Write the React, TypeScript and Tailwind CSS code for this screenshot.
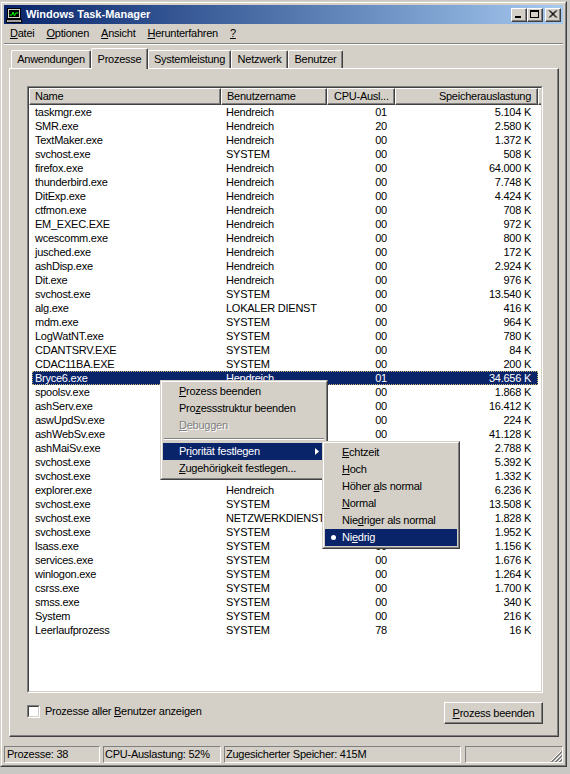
import React from "react";

type Proc = { name: string; user: string; cpu: string; mem: string };

// rows whose user / cpu cells sit under the open menus are left empty
const procs: Proc[] = [
  { name: "taskmgr.exe", user: "Hendreich", cpu: "01", mem: "5.104 K" },
  { name: "SMR.exe", user: "Hendreich", cpu: "20", mem: "2.580 K" },
  { name: "TextMaker.exe", user: "Hendreich", cpu: "00", mem: "1.372 K" },
  { name: "svchost.exe", user: "SYSTEM", cpu: "00", mem: "508 K" },
  { name: "firefox.exe", user: "Hendreich", cpu: "00", mem: "64.000 K" },
  { name: "thunderbird.exe", user: "Hendreich", cpu: "00", mem: "7.748 K" },
  { name: "DitExp.exe", user: "Hendreich", cpu: "00", mem: "4.424 K" },
  { name: "ctfmon.exe", user: "Hendreich", cpu: "00", mem: "708 K" },
  { name: "EM_EXEC.EXE", user: "Hendreich", cpu: "00", mem: "972 K" },
  { name: "wcescomm.exe", user: "Hendreich", cpu: "00", mem: "800 K" },
  { name: "jusched.exe", user: "Hendreich", cpu: "00", mem: "172 K" },
  { name: "ashDisp.exe", user: "Hendreich", cpu: "00", mem: "2.924 K" },
  { name: "Dit.exe", user: "Hendreich", cpu: "00", mem: "976 K" },
  { name: "svchost.exe", user: "SYSTEM", cpu: "00", mem: "13.540 K" },
  { name: "alg.exe", user: "LOKALER DIENST", cpu: "00", mem: "416 K" },
  { name: "mdm.exe", user: "SYSTEM", cpu: "00", mem: "964 K" },
  { name: "LogWatNT.exe", user: "SYSTEM", cpu: "00", mem: "780 K" },
  { name: "CDANTSRV.EXE", user: "SYSTEM", cpu: "00", mem: "84 K" },
  { name: "CDAC11BA.EXE", user: "SYSTEM", cpu: "00", mem: "200 K" },
  { name: "Bryce6.exe", user: "Hendreich", cpu: "01", mem: "34.656 K" },
  { name: "spoolsv.exe", user: "", cpu: "00", mem: "1.868 K" },
  { name: "ashServ.exe", user: "", cpu: "00", mem: "16.412 K" },
  { name: "aswUpdSv.exe", user: "", cpu: "00", mem: "224 K" },
  { name: "ashWebSv.exe", user: "", cpu: "00", mem: "41.128 K" },
  { name: "ashMaiSv.exe", user: "", cpu: "", mem: "2.788 K" },
  { name: "svchost.exe", user: "", cpu: "", mem: "5.392 K" },
  { name: "svchost.exe", user: "", cpu: "", mem: "1.332 K" },
  { name: "explorer.exe", user: "Hendreich", cpu: "", mem: "6.236 K" },
  { name: "svchost.exe", user: "SYSTEM", cpu: "", mem: "13.508 K" },
  { name: "svchost.exe", user: "NETZWERKDIENST", cpu: "", mem: "1.828 K" },
  { name: "svchost.exe", user: "SYSTEM", cpu: "", mem: "1.952 K" },
  { name: "lsass.exe", user: "SYSTEM", cpu: "00", mem: "1.156 K" },
  { name: "services.exe", user: "SYSTEM", cpu: "00", mem: "1.676 K" },
  { name: "winlogon.exe", user: "SYSTEM", cpu: "00", mem: "1.264 K" },
  { name: "csrss.exe", user: "SYSTEM", cpu: "00", mem: "1.700 K" },
  { name: "smss.exe", user: "SYSTEM", cpu: "00", mem: "340 K" },
  { name: "System", user: "SYSTEM", cpu: "00", mem: "216 K" },
  { name: "Leerlaufprozess", user: "SYSTEM", cpu: "78", mem: "16 K" },
];

const SELECTED = 19;

// classic 3d edges
const raised =
  "border border-t-white border-l-white border-r-[#404040] border-b-[#404040] shadow-[inset_-1px_-1px_0_#808080]";
const menuBox =
  "border border-t-[#d4d0c8] border-l-[#d4d0c8] border-r-[#404040] border-b-[#404040] bg-[#d4d0c8]";
const menuBoxInner =
  "border border-t-white border-l-white border-r-[#808080] border-b-[#808080] p-px";

const TitleIcon = () => (
  <svg width="16" height="16" viewBox="0 0 16 16">
    <rect x="1.5" y="1.5" width="13" height="10" fill="#d4d0c8" stroke="#000" />
    <rect x="3" y="3" width="10" height="7" fill="#000" />
    <polyline points="3.5,8 6,8 7,5 8.5,9 9.5,6 12.5,6" fill="none" stroke="#00ff00" strokeWidth="1" />
    <rect x="0.5" y="12.5" width="15" height="3" fill="#c0c0c0" stroke="#000" />
    <line x1="2" y1="14" x2="14" y2="14" stroke="#808080" />
  </svg>
);

const CaptionButton = ({ kind }: { kind: "min" | "max" | "close" }) => (
  <div className={`w-[16px] h-[14px] bg-[#d4d0c8] flex items-center justify-center ${raised}`}>
    <svg width="10" height="9" viewBox="0 0 10 9">
      {kind === "min" && <rect x="1" y="6" width="6" height="2" fill="#000" />}
      {kind === "max" && (
        <>
          <rect x="0.5" y="0.5" width="8" height="7" fill="none" stroke="#000" />
          <rect x="0" y="0" width="9" height="2" fill="#000" />
        </>
      )}
      {kind === "close" && (
        <path d="M1 0.5 L8 7.5 M2 0.5 L9 7.5 M8 0.5 L1 7.5 M9 0.5 L2 7.5" stroke="#000" strokeWidth="1" />
      )}
    </svg>
  </div>
);

const Tab = ({ label, w, active }: { label: string; w: number; active?: boolean }) => (
  <div
    style={{ width: w }}
    className={
      active
        ? "relative z-10 h-[21px] -mb-px bg-[#d4d0c8] border-t border-l border-t-white border-l-white border-r border-r-[#404040] shadow-[inset_-1px_0_0_#808080] rounded-tl-[2px] rounded-tr-[2px] flex items-start justify-center pt-[2px]"
        : "h-[18px] bg-[#d4d0c8] border-t border-l border-t-white border-l-white border-r border-r-[#404040] shadow-[inset_-1px_0_0_#808080] rounded-tl-[2px] rounded-tr-[2px] flex items-center justify-center"
    }
  >
    {label}
  </div>
);

const HeaderCell = ({ w, children, right }: { w: number; children?: React.ReactNode; right?: boolean }) => (
  <div
    style={{ width: w }}
    className={`h-[17px] shrink-0 bg-[#d4d0c8] flex items-center whitespace-nowrap overflow-hidden ${raised} ${
      right ? "justify-end pr-[6px]" : "pl-[5px]"
    }`}
  >
    {children}
  </div>
);

const MenuItem = ({
  children,
  active,
  disabled,
  arrow,
  bullet,
  pl = "pl-[16px]",
}: {
  children: React.ReactNode;
  active?: boolean;
  disabled?: boolean;
  arrow?: boolean;
  bullet?: boolean;
  pl?: string;
}) => (
  <div
    className={`relative h-[17px] flex items-center whitespace-nowrap ${pl} ${
      active ? "bg-[#0a246a] text-white" : disabled ? "text-[#808080] [text-shadow:1px_1px_0_#fff]" : "text-black"
    }`}
  >
    {bullet && <span className="absolute left-[6px] top-[6px] w-[5px] h-[5px] rounded-full bg-white" />}
    {children}
    {arrow && (
      <svg className="absolute right-[6px] top-[5px]" width="4" height="7" viewBox="0 0 4 7">
        <path d="M0 0 L4 3.5 L0 7 Z" fill={active ? "#fff" : "#000"} />
      </svg>
    )}
  </div>
);

export default function App() {
  return (
    <div className="relative w-[570px] h-[774px] overflow-hidden bg-[#c9c8c5] font-['Liberation_Sans',Arial,sans-serif] text-[11px] tracking-[-0.25px] text-black">
      {/* window frame */}
      <div className="mt-px w-[567px] h-[766px] border border-t-[#d4d0c8] border-l-[#d4d0c8] border-r-[#404040] border-b-[#404040]">
        <div className="h-full border border-t-white border-l-white border-r-[#808080] border-b-[#808080] p-[2px] bg-[#d4d0c8] flex flex-col">
          {/* title bar */}
          <div className="h-[19px] shrink-0 bg-linear-to-r from-[#0a246a] to-[#a6caf0] flex items-center pl-[2px] pr-[2px]">
            <TitleIcon />
            <span className="ml-[4px] font-bold text-white tracking-normal">Windows Task-Manager</span>
            <div className="ml-auto flex items-center">
              <CaptionButton kind="min" />
              <CaptionButton kind="max" />
              <div className="w-[2px]" />
              <CaptionButton kind="close" />
            </div>
          </div>

          {/* menu bar */}
          <div className="h-[19px] shrink-0 flex items-center">
            <span className="px-[6px]"><u>D</u>atei</span>
            <span className="px-[6px]"><u>O</u>ptionen</span>
            <span className="px-[6px]"><u>A</u>nsicht</span>
            <span className="px-[6px]"><u>H</u>erunterfahren</span>
            <span className="px-[6px]"><u>?</u></span>
          </div>
          <div className="h-[2px] shrink-0 border-t border-t-[#808080] border-b border-b-white" />

          {/* tabs */}
          <div className="mt-[3px] h-[20px] shrink-0 flex items-end pl-[7px]">
            <Tab label="Anwendungen" w={80} />
            <Tab label="Prozesse" w={57} active />
            <Tab label="Systemleistung" w={83} />
            <Tab label="Netzwerk" w={57} />
            <Tab label="Benutzer" w={55} />
          </div>

          {/* tab page */}
          <div className="ml-[5px] w-[550px] h-[669px] shrink-0 border border-t-white border-l-white border-r-[#404040] border-b-[#404040] shadow-[inset_-1px_-1px_0_#808080] pt-[17px] flex flex-col">
            <div className="ml-[17px] w-[516px] h-[607px] border border-t-[#808080] border-l-[#808080] border-r-white border-b-white">
              <div className="h-full bg-white border border-t-[#404040] border-l-[#404040] border-r-[#d4d0c8] border-b-[#d4d0c8] overflow-hidden">
                <div className="flex">
                  <HeaderCell w={192}>Name</HeaderCell>
                  <HeaderCell w={106}>Benutzername</HeaderCell>
                  <HeaderCell w={68}><span className="pl-[1px]">CPU-Ausl...</span></HeaderCell>
                  <HeaderCell w={143} right>Speicherauslastung</HeaderCell>
                  <div className="h-[17px] flex-1 bg-[#d4d0c8] border-t border-l border-t-white border-l-white border-b border-b-[#404040] shadow-[inset_0_-1px_0_#808080]" />
                </div>
                {procs.map((p, i) => {
                  const sel = i === SELECTED;
                  return (
                    <div
                      key={i}
                      className={`flex h-[14px] items-center whitespace-nowrap ${
                        sel
                          ? "ml-[3px] w-[506px] bg-[#0a246a] text-white outline-1 outline-dotted outline-[#c8b878] -outline-offset-1"
                          : ""
                      }`}
                    >
                      <div className={sel ? "w-[189px] pl-[3px]" : "w-[192px] pl-[6px]"}>{p.name}</div>
                      <div className="w-[106px] pl-[5px]">{p.user}</div>
                      <div className="w-[68px] pr-[8px] text-right">{p.cpu}</div>
                      <div className="w-[143px] pr-[7px] text-right">{p.mem}</div>
                    </div>
                  );
                })}
              </div>
            </div>

            <div className="ml-[17px] w-[516px] mt-[9px] flex items-start justify-between">
              <div className="mt-px flex items-center">
                <div className="w-[13px] h-[13px] border border-t-[#808080] border-l-[#808080] border-r-white border-b-white">
                  <div className="h-full bg-white border border-t-[#404040] border-l-[#404040] border-r-[#d4d0c8] border-b-[#d4d0c8]" />
                </div>
                <span className="ml-[5px]">
                  Prozesse aller <u>B</u>enutzer anzeigen
                </span>
              </div>
              <div className={`w-[99px] h-[22px] bg-[#d4d0c8] flex items-center justify-center ${raised}`}>
                <span>
                  <u>P</u>rozess beenden
                </span>
              </div>
            </div>
          </div>

          {/* status bar */}
          <div className="mt-[9px] h-[17px] shrink-0 flex gap-[3px]">
            <div className="w-[96px] border border-t-[#808080] border-l-[#808080] border-r-white border-b-white pl-[2px] flex items-center">
              Prozesse: 38
            </div>
            <div className="w-[118px] border border-t-[#808080] border-l-[#808080] border-r-white border-b-white pl-[1px] flex items-center">
              CPU-Auslastung: 52%
            </div>
            <div className="w-[237px] border border-t-[#808080] border-l-[#808080] border-r-white border-b-white pl-[1px] flex items-center">
              Zugesicherter Speicher: 415M
            </div>
            <div className="relative flex-1 border border-t-[#808080] border-l-[#808080] border-r-white border-b-white ml-px">
              <svg className="absolute right-0 bottom-0" width="12" height="12" viewBox="0 0 12 12">
                <path d="M11 1 L1 11 M11 5 L5 11 M11 9 L9 11" stroke="#fff" strokeWidth="1" />
                <path d="M12 1 L1 12 M12 2 L2 12 M12 5 L5 12 M12 6 L6 12 M12 9 L9 12 M12 10 L10 12" stroke="#808080" strokeWidth="1" />
              </svg>
            </div>
          </div>
        </div>
      </div>

      {/* context menu */}
      <div className={`absolute left-[160px] top-[380px] w-[168px] ${menuBox}`}>
        <div className={menuBoxInner}>
          <MenuItem>
            <span><u>P</u>rozess beenden</span>
          </MenuItem>
          <MenuItem>
            <span>Pro<u>z</u>essstruktur beenden</span>
          </MenuItem>
          <MenuItem disabled>
            <span><u>D</u>ebuggen</span>
          </MenuItem>
          <div className="h-[9px] flex items-center px-px">
            <div className="w-full h-[2px] border-t border-t-[#808080] border-b border-b-white" />
          </div>
          <MenuItem active arrow>
            <span>Pr<u>i</u>orität festlegen</span>
          </MenuItem>
          <MenuItem>
            <span><u>Z</u>ugehörigkeit festlegen...</span>
          </MenuItem>
        </div>
      </div>

      {/* priority submenu */}
      <div className={`absolute left-[322px] top-[441px] w-[138px] ${menuBox}`}>
        <div className={menuBoxInner}>
          <MenuItem pl="pl-[17px]">
            <span><u>E</u>chtzeit</span>
          </MenuItem>
          <MenuItem pl="pl-[17px]">
            <span><u>H</u>och</span>
          </MenuItem>
          <MenuItem pl="pl-[17px]">
            <span>Höher <u>a</u>ls normal</span>
          </MenuItem>
          <MenuItem pl="pl-[17px]">
            <span><u>N</u>ormal</span>
          </MenuItem>
          <MenuItem pl="pl-[17px]">
            <span>Nie<u>d</u>riger als normal</span>
          </MenuItem>
          <MenuItem pl="pl-[17px]" active bullet>
            <span>Ni<u>e</u>drig</span>
          </MenuItem>
        </div>
      </div>
    </div>
  );
}
